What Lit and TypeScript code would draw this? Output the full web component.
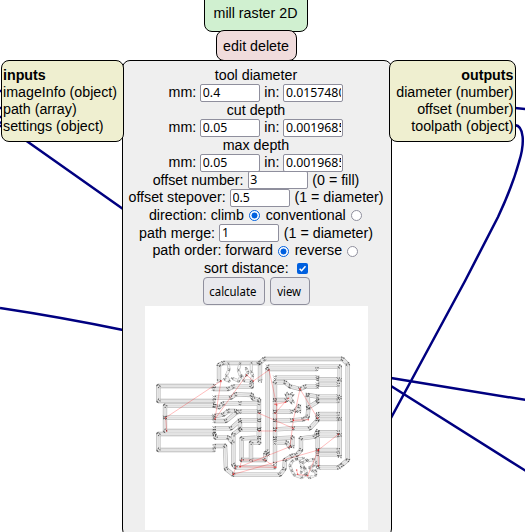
import { LitElement, html, svg, css } from "lit";
import { customElement, property } from "lit/decorators.js";

const TRACES = [
  "208,123 40,123 40,168 208,168",
  "205,132 250,132 265,125 320,125 320,112",
  "208,158 258,158 272,148 320,150 324,160 342,165 342,200 342,226 342,253 342,293 318,293 318,345",
  "208,182 60,182 60,218 60,258 208,258",
  "60,218 206,218",
  "208,182 222,187 234,176 285,175 342,175",
  "208,228 243,228 275,202 285,200 342,200",
  "208,213 235,209 250,198 272,198",
  "208,250 258,250 285,226 342,226",
  "285,230 285,253 342,253",
  "285,253 265,268 265,360 272,367 390,367",
  "208,267 40,267 40,315 208,315",
  "208,267 212,278 250,278 262,292",
  "208,303 240,303 243,372 265,389 405,389 418,372 420,345 440,333 455,330 468,315 468,280 510,275 518,258",
  "342,278 290,280 290,345 360,345 362,325 368,320",
  "222,108 222,60 235,54 345,54 345,108",
  "342,55 358,42 592,42 608,58 608,345 590,360 580,367 520,367",
  "368,330 368,72 516,72",
  "368,65 584,65 584,105 584,158 584,222 584,270 584,335",
  "390,355 390,280 390,253 390,226 390,200 390,165 390,112 420,112 435,124 465,132 480,125 518,125",
  "390,98 518,98",
  "518,103 580,103", "518,119 580,119",
  "488,150 518,155 580,155", "518,168 580,168",
  "518,207 580,207", "518,222 580,222",
  "518,262 580,262", "518,271 580,271",
  "518,315 580,315", "518,328 580,328",
  "390,165 425,165 442,148",
  "425,148 442,172",
  "390,200 440,200", "450,198 462,184 462,200",
  "390,226 440,226 475,223 488,215 490,190 488,150",
  "390,253 445,250 495,250 518,225 518,210",
  "490,187 518,170",
  "390,280 442,278 442,305",
  "390,293 425,293 435,307",
  "518,268 518,315 518,365",
  "342,253 342,278",
];

const LETTERS = [
  "250,56 252,74 244,92 252,108 238,102",
  "285,56 280,75 287,95 281,108 262,100",
  "319,54 319,80 323,92 319,108 297,107 290,92",
  "303,70 309,82 303,92",
  "455,342 442,348 435,362 440,377 448,390 470,398 485,386 480,370 469,366 474,353 485,345",
  "455,342 475,340", "488,348 505,343 512,352 505,362 494,368 503,378 512,378 512,390 494,398 482,389",
  "465,350 476,367 468,382",
];

const JUMPS = [
  "228,108 62,218 65,258", "228,108 210,222 305,90 325,108 372,75 395,180 395,250",
  "342,205 445,250", "342,258 392,258", "390,205 430,160", "390,178 422,172",
  "465,132 445,225 435,305 285,365 393,367", "465,132 518,220", "445,226 490,224",
  "265,388 520,315 580,268", "285,365 290,345 360,345 390,367",
  "265,388 272,366", "520,315 520,362", "520,315 488,392 458,388 455,375",
];

@customElement("toolpath-view")
class ToolpathView extends LitElement {
  static styles = css`
    :host { display: block; width: 223px; height: 224px; background: #fff; }
    svg { display: block; }
    polyline { fill: none; stroke-linejoin: round; }
    .edge { stroke: #aeaeae; stroke-width: 13; }
    .fill { stroke: #eaeaea; stroke-width: 9.5; }
    .mid { stroke: #d2d2d2; stroke-width: 1.6; }
    .ledge { stroke: #b8b8b8; stroke-width: 9; }
    .letter { stroke: #f2f2f2; stroke-width: 6; }
    .jump { stroke: #f00; stroke-opacity: .3; stroke-width: 2.6; }
    .tick { fill: none; stroke: #222; stroke-width: 2; stroke-opacity: .8; }
    .rtick { fill: #d00; fill-opacity: .6; }
  `;
  render() {
    const lines = (list: string[], cls: string) =>
      list.map((p) => svg`<polyline class=${cls} points=${p}></polyline>`);
    const marked = (list: string[], id: string) =>
      list.map((p) => svg`<polyline points=${p} marker-start=${`url(#${id})`} marker-mid=${`url(#${id})`} marker-end=${`url(#${id})`}></polyline>`);
    return html`<svg width="223" height="224" viewBox="0 0 223 224">
      <defs>
        <marker id="t" markerUnits="userSpaceOnUse" markerWidth="22" markerHeight="22" refX="11" refY="11" orient="auto">
          <path class="tick" d="M6 5l3 3l-2 2M14 5l-1 3l3 -1M7 16l3 -3l2 3l3 -2"></path>
        </marker>
        <marker id="s" markerUnits="userSpaceOnUse" markerWidth="12" markerHeight="12" refX="6" refY="6" orient="auto">
          <path class="tick" d="M3 3l2 3l-2 2M9 3l-1 3l1 2"></path>
        </marker>
        <marker id="r" markerUnits="userSpaceOnUse" markerWidth="10" markerHeight="10" refX="5" refY="5">
          <circle class="rtick" cx="5" cy="5" r="2.3"></circle>
        </marker>
      </defs>
      <g transform="translate(0 39) scale(.33333)">
        ${lines(TRACES, "edge")}${lines(TRACES, "fill")}${lines(TRACES, "mid")}
        ${lines(LETTERS, "ledge")}${lines(LETTERS, "letter")}
        ${lines(JUMPS, "jump")}${marked(TRACES, "t")}${marked(LETTERS, "s")}${marked(JUMPS, "r")}
      </g>
    </svg>`;
  }
}

@customElement("port-list")
class PortList extends LitElement {
  @property() heading = "";
  @property({ type: Array }) ports: string[] = [];
  static styles = css`
    :host { display: block; box-sizing: border-box; border: 1px solid #000; border-radius: 8px;
      background: #efefd0; padding: 5.5px 1.5px 5.5px 1px; line-height: 17px; white-space: nowrap; }
    .heading { font-weight: bold; }
  `;
  render() {
    return html`<div class="heading">${this.heading}</div>${this.ports.map((p) => html`<div>${p}</div>`)}`;
  }
}

@customElement("app-root")
class AppRoot extends LitElement {
  static styles = css`
    :host { display: block; position: relative; width: 525px; height: 532px; overflow: hidden; background: #fff;
      font: 14.25px/17px "Liberation Sans", Arial, sans-serif; color: #000; }
    .links { position: absolute; left: 0; top: 0; }
    .links path { fill: none; stroke: #000080; stroke-width: 2.5; }
    .box { position: absolute; box-sizing: border-box; border: 1px solid #000; border-radius: 8px;
      display: flex; justify-content: center; white-space: nowrap; }
    .title { left: 204px; top: -10px; width: 104px; height: 42px; background: #d0f0d0; padding: 14px 1px 0 0; }
    .actions { left: 216px; top: 30px; width: 81px; height: 31px; background: #f0dcdc; padding: 7px 1px 0 0; }
    .panel { left: 122px; top: 60px; width: 270px; height: 477px; background: #efefef;
      flex-direction: column; justify-content: flex-start; align-items: center; padding: 5.5px 2px 0 0; }
    .ins { position: absolute; left: 1px; top: 60px; width: 123px; height: 82px; }
    .outs { position: absolute; left: 389px; top: 60px; width: 127px; height: 82px; text-align: right; }
    .row { display: flex; align-items: center; gap: 4.4px; height: 17.6px; white-space: nowrap; }
    .pair { gap: 4px; height: 17.7px; }
    .head { height: 17.3px; }
    .field { box-sizing: border-box; width: 60px; height: 18px; border: 1px solid #8f8f9d; border-radius: 2px;
      background: #fff; font: 12.3px/16px "Noto Sans", sans-serif; padding: 0 1.5px; }
    .clip { overflow: hidden; }
    .radio { box-sizing: border-box; width: 11px; height: 11px; border: 1px solid #8f8f9d; border-radius: 50%;
      background: #fff; margin: 1px 1.5px 0 .5px; }
    .on { border: 1.5px solid #0060df; background: radial-gradient(circle, #0060df 0 2.7px, #fff 3.3px); }
    .check { width: 11px; height: 11px; margin-left: 4px; }
    .buttons { display: flex; gap: 5px; padding-top: .4px; }
    .btn { box-sizing: border-box; height: 28px; border: 1px solid #8f8f9d; border-radius: 4px; background: #e9e9ed;
      display: flex; align-items: center; justify-content: center; font: 12.5px/16px "Noto Sans", sans-serif; padding-top: 2px; }
    .btn span { transform: scaleX(.91); }
    .calc { width: 62px; padding-right: 1px; }
    .view { width: 40px; }
    toolpath-view { margin-top: .9px; }
  `;
  render() {
    const field = (v: string) => html`<div class="field"><div class="clip">${v}</div></div>`;
    const radio = (on: boolean) => html`<div class="radio ${on ? "on" : ""}"></div>`;
    const pair = (name: string, mm: string, inch: string) => html`
      <div class="row head">${name}</div>
      <div class="row pair"><span>mm:</span>${field(mm)}<span>in:</span>${field(inch)}</div>`;
    return html`
      <svg class="links" width="525" height="532">
        <path d="M0 308Q60 317 123 330L391 378L526 400"></path>
        <path d="M0 122L28 142L123 209L391 386L526 471"></path>
        <path d="M0 91h3M0 108h3M0 117h3M0 126h3"></path>
        <path d="M515 108L526 109"></path>
        <path d="M515 125C524 126 525 143 519 162C513 184 505 202 498 217L465 281L391 418"></path>
      </svg>
      <div class="box title">mill raster 2D</div>
      <div class="box actions">edit delete</div>
      <div class="box panel">
        ${pair("tool diameter", "0.4", "0.0157480")}
        ${pair("cut depth", "0.05", "0.0019685")}
        ${pair("max depth", "0.05", "0.0019685")}
        <div class="row"><span>offset number:</span>${field("3")}<span>(0 = fill)</span></div>
        <div class="row"><span>offset stepover:</span>${field("0.5")}<span>(1 = diameter)</span></div>
        <div class="row"><span>direction: climb</span>${radio(true)}<span>conventional</span>${radio(false)}</div>
        <div class="row"><span>path merge:</span>${field("1")}<span>(1 = diameter)</span></div>
        <div class="row"><span>path order: forward</span>${radio(true)}<span>reverse</span>${radio(false)}</div>
        <div class="row"><span>sort distance:</span>
          <svg class="check" viewBox="0 0 11 11"><rect width="11" height="11" rx="2" fill="#0060df"></rect><path d="M2.6 5.7L4.6 7.7L8.5 3.3" fill="none" stroke="#fff" stroke-width="1.5"></path></svg>
        </div>
        <div class="buttons"><div class="btn calc"><span>calculate</span></div><div class="btn view"><span>view</span></div></div>
        <toolpath-view></toolpath-view>
      </div>
      <port-list class="ins" heading="inputs" .ports=${["imageInfo (object)", "path (array)", "settings (object)"]}></port-list>
      <port-list class="outs" heading="outputs" .ports=${["diameter (number)", "offset (number)", "toolpath (object)"]}></port-list>
    `;
  }
}
